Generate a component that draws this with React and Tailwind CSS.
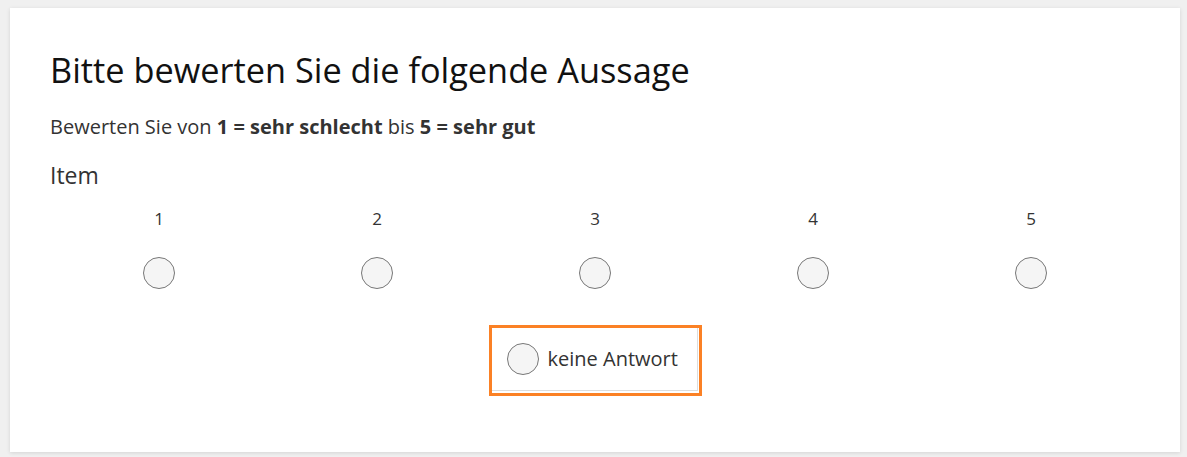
import React from 'react'

const Radio = () => (
  <span className="block w-[32px] h-[32px] rounded-full border border-[#777] bg-[#f5f5f5]" />
)

export default function App() {
  const options = [1, 2, 3, 4, 5]

  return (
    <div className="w-[1187px] h-[457px] bg-[#f0f0f0] pt-[8px] pl-[10px] font-['Open_Sans',sans-serif]">
      <div className="w-[1170px] h-[444px] bg-white shadow-[0_1px_4px_rgba(0,0,0,0.12)] px-[40px] pt-[39px]">
        <h1 className="text-[34.3px] leading-[46px] text-[#111]">Bitte bewerten Sie die folgende Aussage</h1>
        <p className="mt-[20px] text-[20px] leading-[28px] text-[#333]">
          Bewerten Sie von <b>1 = sehr schlecht</b> bis <b>5 = sehr gut</b>
        </p>
        <div className="mt-[18px] text-[23px] leading-[32px] text-[#333]">Item</div>

        {/* Skala */}
        <div className="grid grid-cols-5 mt-[16px]">
          {options.map((n) => (
            <div key={n} className="flex flex-col items-center">
              <span className="text-[17px] leading-[24px] text-[#333]">{n}</span>
              <div className="mt-[26px]">
                <Radio />
              </div>
            </div>
          ))}
        </div>

        {/* keine Antwort */}
        <div className="flex justify-center mt-[36px]">
          <div className="border-[3px] border-[#fb8125] w-[213px] h-[71px] pr-[1px] pb-[2px]">
            <div className="flex items-center h-full border-r border-b border-[#ddd] pl-[15px] gap-[9px]">
              <Radio />
              <span className="text-[20px] text-[#333]">keine Antwort</span>
            </div>
          </div>
        </div>
      </div>
    </div>
  )
}
